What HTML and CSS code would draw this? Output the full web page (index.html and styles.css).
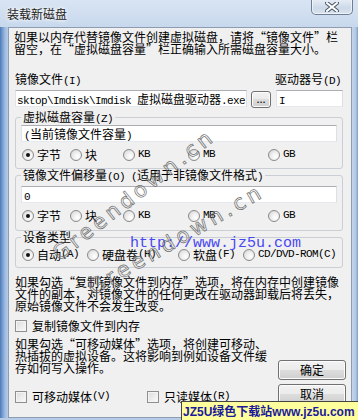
FILE: index.html
```html
<!DOCTYPE html>
<html lang="zh-CN">
<head>
<meta charset="utf-8">
<title>装载新磁盘</title>
<link rel="stylesheet" href="styles.css">
</head>
<body>
<div class="win">
  <div class="titlebar">
    <span class="title">装载新磁盘</span>
    <div class="close">
      <svg width="14" height="10" viewBox="0 0 14 10"><path d="M2 1 L12 9 M12 1 L2 9" stroke="#4a5568" stroke-width="4" stroke-linecap="square"/><path d="M2 1 L12 9 M12 1 L2 9" stroke="#fff" stroke-width="2" stroke-linecap="square"/></svg>
    </div>
  </div>
  <div class="frame-body">
    <div class="edge edge-left"></div>
    <div class="client">
      <p class="para p1">如果以内存代替镜像文件创建虚拟磁盘，请将“镜像文件”栏<br>留空，在“虚拟磁盘容量”栏正确输入所需磁盘容量大小。</p>
      <div class="labels"><span>镜像文件<span class="lat">(I)</span></span><span class="lbl-drive">驱动器号<span class="lat">(D)</span></span></div>
      <div class="fields">
        <div class="field f-path"><span class="lat">sktop\Imdisk\Imdisk </span>虚拟磁盘驱动器<span class="lat">.exe</span></div>
        <div class="btn btn-browse">...</div>
        <div class="field f-drive"><span class="lat">I</span></div>
      </div>
      <fieldset class="group g1">
        <legend>虚拟磁盘容量<span class="lat">(Z)</span></legend>
        <div class="field"><span class="lat">(</span>当前镜像文件容量<span class="lat">)</span></div>
        <div class="radios">
          <label class="opt c48"><span class="radio on"></span>字节</label>
          <label class="opt c53"><span class="radio"></span>块</label>
          <label class="opt c65"><span class="radio"></span><span class="lat">KB</span></label>
          <label class="opt c80"><span class="radio"></span><span class="lat">MB</span></label>
          <label class="opt"><span class="radio"></span><span class="lat">GB</span></label>
        </div>
      </fieldset>
      <fieldset class="group g2">
        <legend>镜像文件偏移量<span class="lat">(O) (</span>适用于非镜像文件格式<span class="lat">)</span></legend>
        <div class="field"><span class="lat">0</span></div>
        <div class="radios">
          <label class="opt c48"><span class="radio on"></span>字节</label>
          <label class="opt c53"><span class="radio"></span>块</label>
          <label class="opt c65"><span class="radio"></span><span class="lat">KB</span></label>
          <label class="opt c80"><span class="radio"></span><span class="lat">MB</span></label>
          <label class="opt"><span class="radio"></span><span class="lat">GB</span></label>
        </div>
      </fieldset>
      <fieldset class="group g3">
        <legend>设备类型</legend>
        <div class="radios">
          <label class="opt c65"><span class="radio on"></span>自动<span class="lat">(A)</span></label>
          <label class="opt c91"><span class="radio"></span>硬盘卷<span class="lat">(H)</span></label>
          <label class="opt c65"><span class="radio"></span>软盘<span class="lat">(F)</span></label>
          <label class="opt"><span class="radio"></span><span class="lat">CD/DVD-ROM(C)</span></label>
        </div>
      </fieldset>
      <p class="para p3">如果勾选“复制镜像文件到内存”选项，将在内存中创建镜像<br>文件的副本，对镜像文件的任何更改在驱动器卸载后将丢失，<br>原始镜像文件不会发生改变。</p>
      <label class="chk-row c-copy"><span class="checkbox"></span>复制镜像文件到内存</label>
      <div class="bottom">
        <div class="bottom-left">
          <p class="para p4">如果勾选“可移动媒体”选项，将创建可移动、<br>热插拔的虚拟设备。这将影响到例如设备文件缓<br>存如何写入操作。</p>
          <div class="chk-line">
            <label class="chk-row c-rem"><span class="checkbox"></span>可移动媒体<span class="lat">(V)</span></label>
            <label class="chk-row"><span class="checkbox"></span>只读媒体<span class="lat">(R)</span></label>
          </div>
        </div>
        <div class="buttons">
          <div class="btn btn-main">确定</div>
          <div class="btn btn-main">取消</div>
        </div>
      </div>
    </div>
    <div class="edge edge-right"></div>
  </div>

  <div class="wm-url">http://www.jz5u.com</div>
  <div class="wm-green wm-a">Greendown.cn</div>
  <div class="wm-green wm-b">Greendown.cn</div>
  <div class="banner"><span class="b-lat">JZ5U</span>绿色下载站<span class="b-lat">www.jz5u.com</span></div>
</div>
</body>
</html>
```

FILE: styles.css
```css
* { box-sizing: border-box; }
html, body { margin: 0; padding: 0; }
body {
  width: 358px;
  height: 420px;
  overflow: hidden;
  font-family: "Noto Sans CJK SC", "Noto Sans", sans-serif;
  font-size: 12px;
  line-height: 12px;
  color: #000;
}
.win {
  position: relative;
  width: 358px;
  height: 420px;
  background: linear-gradient(to bottom, #d8e4f3 0px, #c6d7ec 30px, #b7cce6 420px);
  overflow: hidden;
  display: flex;
  flex-direction: column;
}
.titlebar {
  height: 27px;
  flex: none;
  display: flex;
  align-items: flex-start;
  justify-content: space-between;
}
.title {
  margin: 8px 0 0 7px;
  font-size: 12px;
  line-height: 12px;
  color: #222;
  text-shadow: 0 0 3px #fff, 0 0 5px #fff;
}
.close {
  width: 42px;
  height: 16px;
  margin-right: 5px;
  margin-top: -1px;
  border: 1px solid #6e7f95;
  border-top: none;
  border-radius: 0 0 5px 5px;
  background: linear-gradient(to bottom, #e8eef6, #cdd9e8 60%, #d9e3ef);
  box-shadow: inset 0 0 0 1px rgba(255,255,255,0.6);
  display: flex;
  align-items: center;
  justify-content: center;
}
.frame-body {
  display: flex;
  height: 391px;
}
.edge { flex: none; }
.edge-left {
  width: 8px;
  background: linear-gradient(to right, #4d78b3 0, #6e97cc 2px, #9dbbe2 5px, #b7cce6 8px);
}
.edge-right {
  width: 6px;
  background: linear-gradient(to right, #c3d5ea 0, #b0c7e3 4px, #7d99bf 6px);
}
.client {
  width: 344px;
  height: 391px;
  border: 1px solid #8d9cb0;
  background: #f0f0f0;
  padding: 0 8px 0 6px;
}
.lat {
  font-family: "Liberation Mono", monospace;
  font-size: 11px;
  letter-spacing: -0.6px;
}
.para { margin: 0; }
.p1 { margin: 3px 0 0 -1px; }
.labels {
  margin-top: 18px;
  display: flex;
  justify-content: space-between;
  padding-right: 1px;
}
.lbl-drive { width: 67px; }
.fields {
  margin-top: 3px;
  display: flex;
  align-items: flex-start;
}
.field {
  height: 17px;
  background: #fff;
  border: 1px solid;
  border-color: #abadb3 #dbdfe6 #e3e9ef #e2e3ea;
  padding: 1px 2px 0;
  line-height: 14px;
  white-space: nowrap;
  overflow: hidden;
}
.f-path { width: 232px; padding-left: 1px; }
.btn-browse {
  width: 20px;
  height: 17px;
  margin: 1px 5px 0 4px;
  line-height: 12px;
  text-align: center;
  font-size: 11px;
}
.f-drive { width: 67px; }
.btn {
  border: 1px solid #707070;
  border-radius: 3px;
  background: linear-gradient(to bottom, #f2f2f2 0%, #ebebeb 49%, #dddddd 50%, #cfcfcf 100%);
  box-shadow: inset 0 0 0 1px #fcfcfc;
  color: #000;
}
.group {
  margin: 0;
  padding: 0 5px 0 5px;
  border: 1px solid #c9cfd5;
  border-radius: 3px;
  min-width: 0;
}
.group legend {
  padding: 0 2px;
  line-height: 12px;
  height: 12px;
}
.g1 { margin-top: 3px; padding-bottom: 7px; }
.g1 .field { margin-top: 2px; }
.g2 { margin-top: 0; padding-bottom: 8px; }
.g2 .field { margin-top: 5px; }
.g3 { margin-top: 0; padding-bottom: 6px; }
.g3 .radios { margin-top: 5px; }
.radios {
  display: flex;
  margin-top: 6px;
  margin-left: 1px;
  height: 13px;
}
.opt {
  display: flex;
  align-items: center;
  line-height: 13px;
  white-space: nowrap;
}
.c48 { width: 48px; }
.c53 { width: 53px; }
.c65 { width: 65px; }
.c80 { width: 80px; }
.c91 { width: 91px; }
.radio {
  position: relative;
  flex: none;
  width: 12px;
  height: 12px;
  border-radius: 50%;
  border: 1px solid #8a8a8a;
  background: radial-gradient(circle at 65% 65%, #ffffff 0%, #f0f0f0 40%, #d0d0d0 100%);
  margin-right: 3px;
}
.radio.on::after {
  content: "";
  position: absolute;
  left: 3px;
  top: 3px;
  width: 4px;
  height: 4px;
  border-radius: 50%;
  background: #111;
}
.p3 { margin-top: 8px; }
.chk-row {
  display: flex;
  align-items: center;
  height: 13px;
  line-height: 13px;
  white-space: nowrap;
}
.c-copy { margin-top: 7px; }
.checkbox {
  flex: none;
  width: 12px;
  height: 12px;
  border: 1px solid #8e8f8f;
  background: linear-gradient(135deg, #dcdcdc, #fbfbfb);
  box-shadow: inset 0 0 0 1px #f4f4f4;
  margin-right: 5px;
}
.bottom {
  display: flex;
  justify-content: space-between;
}
.bottom-left { width: 262px; }
.p4 { margin-top: 6px; }
.chk-line {
  display: flex;
  margin-top: 16px;
}
.c-rem { width: 132px; }
.buttons {
  display: flex;
  flex-direction: column;
  gap: 4px;
  margin-top: 28px;
  margin-right: -3px;
}
.btn-main {
  width: 68px;
  height: 20px;
  line-height: 17px;
  text-align: center;
}

/* overlays: watermarks */
.wm-url {
  position: absolute;
  left: 130px;
  top: 236px;
  font-family: "Liberation Mono", monospace;
  font-size: 15px;
  line-height: 15px;
  color: #4848f0;
  white-space: nowrap;
}
.wm-green {
  position: absolute;
  font-family: "DejaVu Sans", sans-serif;
  font-size: 21px;
  line-height: 21px;
  letter-spacing: 4px;
  color: transparent;
  -webkit-text-stroke: 0.7px #6f6f6f;
  white-space: nowrap;
  transform-origin: 0 100%;
}
.wm-a { left: 62px; top: 244px; transform: rotate(-38deg); }
.wm-b { left: 95px; top: 278px; transform: rotate(-30deg); }
.banner {
  position: absolute;
  left: 181px;
  top: 401px;
  width: 180px;
  height: 20px;
  background: #fefe9c;
  border-top: 1px solid #444;
  border-left: 1px solid #444;
  padding-left: 1px;
  font-family: "Noto Sans CJK SC", sans-serif;
  font-weight: bold;
  font-size: 12px;
  line-height: 18px;
  color: #1b1b9a;
  white-space: nowrap;
}
.b-lat {
  font-family: "Liberation Sans", sans-serif;
  font-size: 12px;
}
```
